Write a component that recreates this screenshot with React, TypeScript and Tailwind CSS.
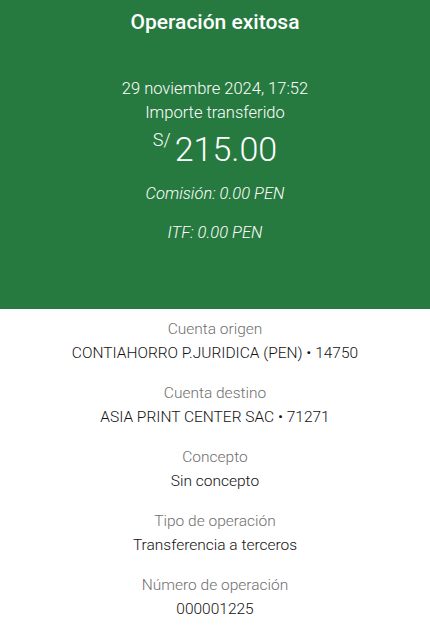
export default function App() {
  const rows = [
    { label: "Cuenta origen", value: "CONTIAHORRO P.JURIDICA (PEN) • 14750" },
    { label: "Cuenta destino", value: "ASIA PRINT CENTER SAC • 71271" },
    { label: "Concepto", value: "Sin concepto" },
    { label: "Tipo de operación", value: "Transferencia a terceros" },
    { label: "Número de operación", value: "000001225" },
  ];

  return (
    <div className="w-[430px] h-[629px] overflow-hidden bg-white font-['Roboto',sans-serif]">
      <div className="h-[309px] bg-[#277a3f] text-white flex flex-col items-center">
        <h1 className="mt-[9px] text-[21px] leading-[26px] font-medium">Operación exitosa</h1>
        <p className="mt-[42px] text-[16.5px] leading-[24px] font-light">29 noviembre 2024, 17:52</p>
        <p className="text-[16.5px] leading-[24px] font-light">Importe transferido</p>
        <div className="flex items-start mt-[4px]">
          <span className="text-[18px] leading-[20px] font-light mt-[1px] mr-[4px]">S/</span>
          <span className="text-[34px] leading-[40px] font-light">215.00</span>
        </div>
        <p className="mt-[13px] text-[16.5px] leading-[24px] font-light italic">Comisión: 0.00 PEN</p>
        <p className="mt-[15px] text-[16.5px] leading-[24px] font-light italic">ITF: 0.00 PEN</p>
      </div>
      <div className="flex flex-col items-center pt-[8px]">
        {rows.map((r) => (
          <div key={r.label} className="flex flex-col items-center h-[64px]">
            <span className="text-[15.5px] leading-[24px] text-[#6f6f6f] font-light">{r.label}</span>
            <span className="text-[15.5px] leading-[24px] text-[#121212] font-light">{r.value}</span>
          </div>
        ))}
      </div>
    </div>
  );
}
